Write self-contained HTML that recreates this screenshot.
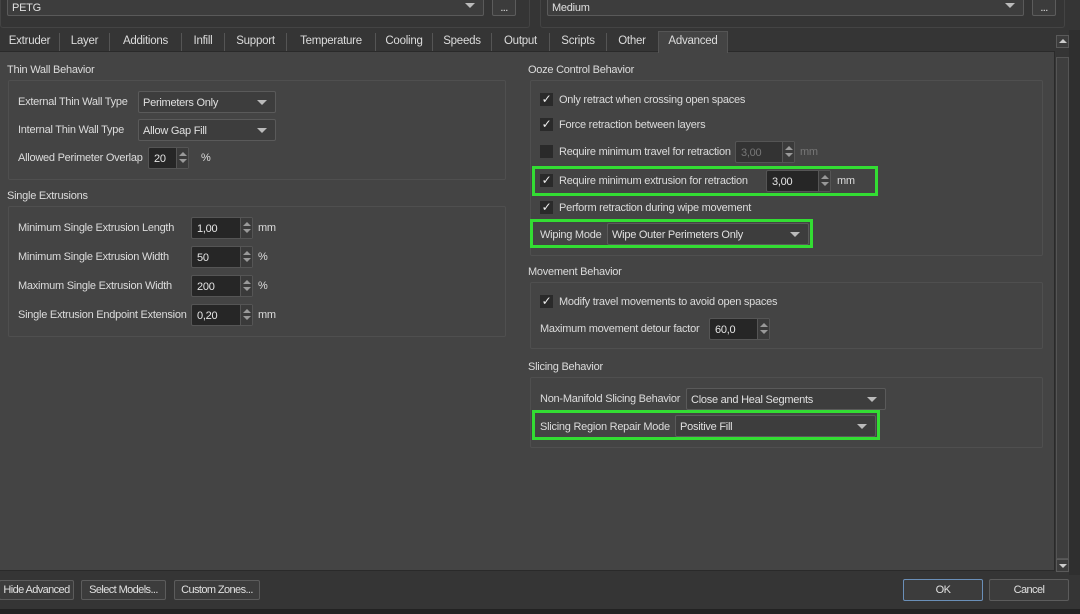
<!DOCTYPE html>
<html><head><meta charset="utf-8"><style>
*{box-sizing:border-box;margin:0;padding:0}
body{width:1080px;height:614px;overflow:hidden;background:#353535;font-family:"Liberation Sans",Tahoma,sans-serif;font-size:11px;letter-spacing:-0.25px;color:#dcdcdc;position:relative}
.a{position:absolute;white-space:nowrap}
.combo{position:absolute;height:22px;background:#3d3d3d;border:1px solid #5a5a5a;border-radius:2px;padding:5px 4px 0;color:#e0e0e0;white-space:nowrap}
.combo:after{content:"";position:absolute;right:8px;top:8px;border-left:5px solid transparent;border-right:5px solid transparent;border-top:5px solid #bbb}
.spin{position:absolute;height:22px;background:#262626;border:1px solid #555;border-radius:2px;padding:5px 5px 0;color:#e6e6e6}
.spin i{position:absolute;right:0;top:0;width:12px;height:20px;background:#3a3a3a;border-left:1px solid #555}
.spin i:before{content:"";position:absolute;left:2px;top:4px;border-left:4px solid transparent;border-right:4px solid transparent;border-bottom:4px solid #999}
.spin i:after{content:"";position:absolute;left:2px;top:11px;border-left:4px solid transparent;border-right:4px solid transparent;border-top:4px solid #999}
.dis{color:#777;background:#333}
.grp{position:absolute;border:1px solid #4f4f4f;border-radius:2px}
.cb{position:absolute;width:13px;height:13px;background:#2a2a2a;color:#eee;font-size:12px;line-height:13px;text-align:center}
.hl{position:absolute;border:3px solid #33dd33}
.btn{position:absolute;height:20px;background:#3c3c3c;border:1px solid #5c5c5c;border-radius:2px;text-align:center;line-height:18px;color:#e0e0e0;font-size:11px;letter-spacing:-0.6px;white-space:nowrap;overflow:hidden}
.tab{position:absolute;top:33px;height:18px;line-height:17px;text-align:center;border-right:1px solid #555;color:#dcdcdc;font-size:11.5px;white-space:nowrap}
</style></head><body>
<div class="a" style="left:0;top:0;width:530px;height:28px;border:1px solid #444;border-top:none;border-radius:0 0 3px 3px"></div>
<div class="combo" style="left:7px;top:-6px;width:477px;height:22px;padding-top:7px">PETG</div>
<div class="btn" style="left:492px;top:-4px;width:24px;line-height:22px">...</div>
<div class="a" style="left:540px;top:0;width:525px;height:28px;border:1px solid #444;border-top:none;border-radius:0 0 3px 3px"></div>
<div class="combo" style="left:547px;top:-6px;width:477px;padding-top:7px">Medium</div>
<div class="btn" style="left:1032px;top:-4px;width:24px;line-height:22px">...</div>
<div class="tab" style="left:0;width:60px">Extruder</div>
<div class="tab" style="left:60px;width:50px">Layer</div>
<div class="tab" style="left:110px;width:72px">Additions</div>
<div class="tab" style="left:182px;width:43px">Infill</div>
<div class="tab" style="left:225px;width:62px">Support</div>
<div class="tab" style="left:287px;width:89px">Temperature</div>
<div class="tab" style="left:376px;width:57px">Cooling</div>
<div class="tab" style="left:433px;width:59px">Speeds</div>
<div class="tab" style="left:492px;width:58px">Output</div>
<div class="tab" style="left:550px;width:57px">Scripts</div>
<div class="tab" style="left:607px;width:50px;border-right:none">Other</div>
<div class="a" style="left:0;top:51px;width:1055px;height:520px;background:#444;border-top:1px solid #2a2a2a;border-right:1px solid #2a2a2a;border-bottom:1px solid #2a2a2a"></div>
<div class="a" style="left:658px;top:31px;width:70px;height:22px;background:#444;border:1px solid #555;border-bottom:none;padding-top:3px;text-align:center;font-size:11.5px">Advanced</div>
<div class="a" style="left:1069px;top:30px;width:11px;height:545px;background:#2f2f2f"></div>
<div class="a" style="left:1056px;top:35px;width:13px;height:13px;background:#3c3c3c;border:1px solid #5a5a5a"></div>
<div class="a" style="left:1059px;top:39px;border-left:4px solid transparent;border-right:4px solid transparent;border-bottom:4px solid #ccc"></div>
<div class="a" style="left:1056px;top:57px;width:13px;height:502px;background:#3e3e3e;border:1px solid #555"></div>
<div class="a" style="left:1056px;top:559px;width:13px;height:13px;background:#3c3c3c;border:1px solid #5a5a5a"></div>
<div class="a" style="left:1059px;top:564px;border-left:4px solid transparent;border-right:4px solid transparent;border-top:4px solid #ccc"></div>

<div class="a" style="left:7px;top:64px">Thin Wall Behavior</div>
<div class="grp" style="left:8px;top:80px;width:498px;height:100px"></div>
<div class="a" style="left:18px;top:96px">External Thin Wall Type</div>
<div class="combo" style="left:138px;top:91px;width:138px">Perimeters Only</div>
<div class="a" style="left:18px;top:124px">Internal Thin Wall Type</div>
<div class="combo" style="left:138px;top:119px;width:138px">Allow Gap Fill</div>
<div class="a" style="left:18px;top:152px">Allowed Perimeter Overlap</div>
<div class="spin" style="left:148px;top:147px;width:41px">20<i></i></div>
<div class="a" style="left:201px;top:152px">%</div>

<div class="a" style="left:7px;top:190px">Single Extrusions</div>
<div class="grp" style="left:8px;top:206px;width:498px;height:131px"></div>
<div class="a" style="left:18px;top:222px">Minimum Single Extrusion Length</div>
<div class="spin" style="left:191px;top:217px;width:62px">1,00<i></i></div><div class="a" style="left:258px;top:222px">mm</div>
<div class="a" style="left:18px;top:251px">Minimum Single Extrusion Width</div>
<div class="spin" style="left:191px;top:246px;width:62px">50<i></i></div><div class="a" style="left:258px;top:251px">%</div>
<div class="a" style="left:18px;top:280px">Maximum Single Extrusion Width</div>
<div class="spin" style="left:191px;top:275px;width:62px">200<i></i></div><div class="a" style="left:258px;top:280px">%</div>
<div class="a" style="left:18px;top:309px">Single Extrusion Endpoint Extension</div>
<div class="spin" style="left:191px;top:304px;width:62px">0,20<i></i></div><div class="a" style="left:258px;top:309px">mm</div>

<div class="a" style="left:528px;top:64px">Ooze Control Behavior</div>
<div class="grp" style="left:530px;top:80px;width:513px;height:176px"></div>
<div class="cb" style="left:540px;top:93px">✓</div><div class="a" style="left:559px;top:94px">Only retract when crossing open spaces</div>
<div class="cb" style="left:540px;top:118px">✓</div><div class="a" style="left:559px;top:119px">Force retraction between layers</div>
<div class="cb" style="left:540px;top:145px"></div><div class="a" style="left:559px;top:146px">Require minimum travel for retraction</div>
<div class="spin dis" style="left:735px;top:141px;width:60px">3,00<i></i></div><div class="a" style="left:800px;top:146px;color:#777">mm</div>
<div class="hl" style="left:532px;top:166px;width:346px;height:30px"></div>
<div class="cb" style="left:540px;top:174px">✓</div><div class="a" style="left:559px;top:175px">Require minimum extrusion for retraction</div>
<div class="spin" style="left:766px;top:170px;width:65px">3,00<i></i></div><div class="a" style="left:837px;top:175px">mm</div>
<div class="cb" style="left:540px;top:201px">✓</div><div class="a" style="left:559px;top:202px">Perform retraction during wipe movement</div>
<div class="hl" style="left:530px;top:219px;width:283px;height:29px"></div>
<div class="a" style="left:540px;top:229px">Wiping Mode</div>
<div class="combo" style="left:607px;top:223px;width:202px">Wipe Outer Perimeters Only</div>

<div class="a" style="left:528px;top:266px">Movement Behavior</div>
<div class="grp" style="left:530px;top:282px;width:513px;height:67px"></div>
<div class="cb" style="left:540px;top:295px">✓</div><div class="a" style="left:559px;top:296px">Modify travel movements to avoid open spaces</div>
<div class="a" style="left:540px;top:323px">Maximum movement detour factor</div>
<div class="spin" style="left:709px;top:318px;width:61px">60,0<i></i></div>

<div class="a" style="left:528px;top:361px">Slicing Behavior</div>
<div class="grp" style="left:530px;top:377px;width:513px;height:71px"></div>
<div class="a" style="left:540px;top:393px">Non-Manifold Slicing Behavior</div>
<div class="combo" style="left:686px;top:388px;width:200px">Close and Heal Segments</div>
<div class="hl" style="left:532px;top:410px;width:348px;height:30px"></div>
<div class="a" style="left:540px;top:421px">Slicing Region Repair Mode</div>
<div class="combo" style="left:675px;top:415px;width:201px">Positive Fill</div>

<div class="btn" style="left:-1px;top:580px;width:75px">Hide Advanced</div>
<div class="btn" style="left:81px;top:580px;width:85px">Select Models...</div>
<div class="btn" style="left:174px;top:580px;width:86px">Custom Zones...</div>
<div class="btn" style="left:903px;top:579px;width:80px;height:22px;border-color:#6a8fb8;line-height:20px">OK</div>
<div class="btn" style="left:989px;top:579px;width:80px;height:22px;line-height:20px">Cancel</div>
<div class="a" style="left:0;top:609px;width:1080px;height:5px;background:#222"></div>
</body></html>
